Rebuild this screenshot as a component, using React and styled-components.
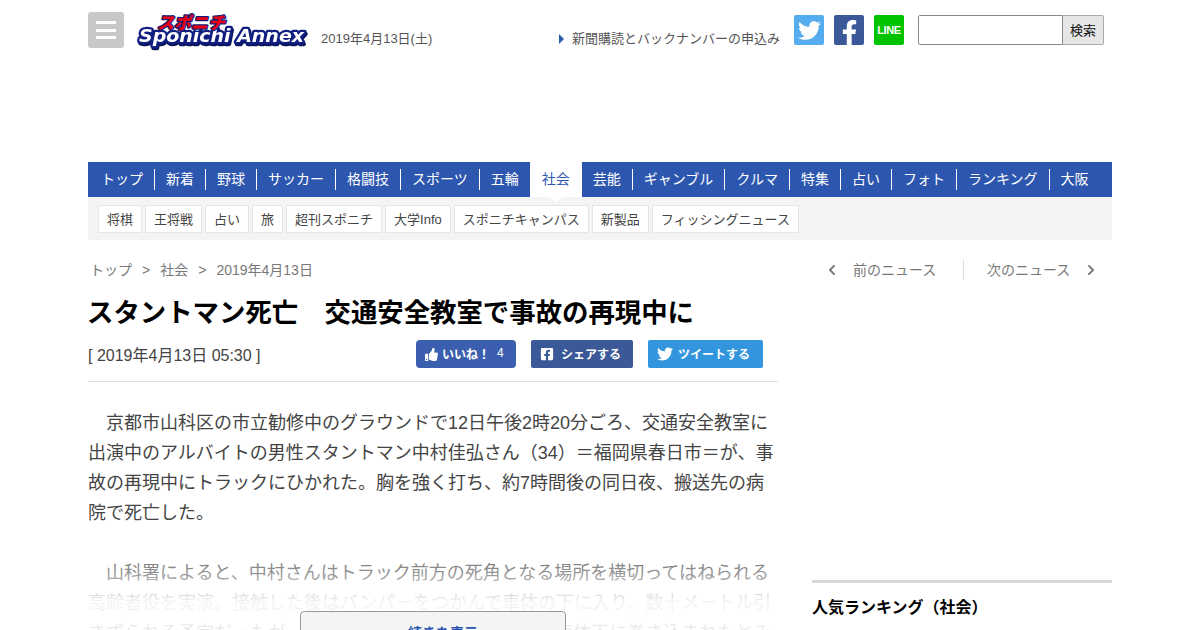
import React from "react";
import styled, { createGlobalStyle } from "styled-components";
import { FaTwitter, FaFacebookF, FaThumbsUp, FaFacebookSquare, FaChevronLeft, FaChevronRight } from "react-icons/fa";

const Global = createGlobalStyle`
  html, body { margin: 0; padding: 0; background: #fff; overflow: hidden; }
  body { font-family: "Liberation Sans", "Noto Sans CJK JP", sans-serif; color: #444; }
  a { color: inherit; text-decoration: none; }
`;

const Viewport = styled.div`height: 630px; overflow: hidden;`;
const Page = styled.div`width: 1024px; margin: 0 auto;`;

const Header = styled.header`
  height: 162px;
  box-sizing: border-box;
  padding: 12px 8px 0 0;
  display: flex;
  align-items: flex-start;
`;
const Menu = styled.button`
  width: 36px; height: 36px; padding: 9px 8px; border: 0; border-radius: 3px;
  background: #c8c8c8; display: flex; flex-direction: column; justify-content: space-between;
  box-sizing: border-box;
  span { display: block; height: 3px; background: #fff; }
`;
const Logo = styled.svg`width: 172px; height: 38px; margin-left: 13px; display: block; overflow: visible;`;
const LogoMain = styled.text`
  font-family: "DejaVu Sans", sans-serif; font-weight: 700; font-style: italic; font-size: 18.5px;
  fill: #fff; stroke: #101f80; stroke-width: 4.5px; paint-order: stroke; stroke-linejoin: round;
  filter: drop-shadow(1px 2px 0 #0a1560);
`;
const LogoKana = styled.text`
  font-family: "Noto Sans CJK JP", sans-serif; font-weight: 900; font-style: italic; font-size: 17px;
  fill: #e60012; stroke: #101f80; stroke-width: 2.4px; paint-order: stroke; stroke-linejoin: round;
`;
const DateText = styled.div`
  font-size: 13px; line-height: 16px; color: #555; margin: 19px 0 0 12px;
`;
const Right = styled.div`margin-left: auto; display: flex; align-items: flex-start;`;
const Subscribe = styled.a`
  font-size: 13px; line-height: 16px; color: #555; margin: 19px 4px 0 0; display: flex; align-items: center;
  &::before {
    content: ""; width: 0; height: 0; margin-right: 8px;
    border-left: 5px solid #2d5cab; border-top: 5px solid transparent; border-bottom: 5px solid transparent;
  }
`;
const Social = styled.a`
  width: 30px; height: 30px; margin: 3px 0 0 10px; border-radius: 2px;
  background: ${p => p.$bg}; color: #fff; overflow: hidden;
  display: flex; align-items: center; justify-content: center;
`;
const LineLabel = styled.span`font-size: 11px; font-weight: 700; letter-spacing: -0.4px;`;
const Search = styled.form`display: flex; margin: 3px 0 0 14px;`;
const SearchInput = styled.input`
  width: 145px; height: 30px; box-sizing: border-box; border: 1px solid #8a8a8a; border-radius: 2px 0 0 2px;
  background: #fff; padding: 0;
`;
const SearchButton = styled.button`
  width: 41px; height: 30px; box-sizing: border-box; border: 1px solid #aaa; border-left: 0; border-radius: 0 2px 2px 0;
  background: #e6e6e6; font: 13px "Liberation Sans", "Noto Sans CJK JP", sans-serif; color: #111; padding: 0 0 2px;
`;

const Nav = styled.nav`
  height: 35px; background: #2d57ae; display: flex; align-items: center; padding-left: 2px;
`;
const NavItem = styled.a`
  position: relative;
  font-size: 14px; color: ${p => p.$active ? "#2d57ae" : "#fff"};
  padding: 0 ${p => p.$active ? 12 : 11}px 4px;
  box-sizing: border-box;
  display: flex; align-items: center;
  height: ${p => p.$active ? 35 : 21}px;
  background: ${p => p.$active ? "#fff" : "transparent"};
  border-right: ${p => p.$sep ? "1px solid #fff" : "0"};
  ${p => p.$active && `
    &::after {
      content: ""; position: absolute; left: 50%; margin-left: -7px; top: 35px;
      border-left: 7px solid transparent; border-right: 7px solid transparent; border-top: 5px solid #fff;
    }
  `}
`;
const SubNav = styled.div`
  height: 43px; box-sizing: border-box; background: #f4f4f5; padding: 8px 10px; display: flex; gap: 3px;
`;
const Chip = styled.a`
  height: 28px; box-sizing: border-box; padding: 0 8px 2px; border: 1px solid #e6e6e6; background: #fff;
  font-size: 13px; color: #444; display: flex; align-items: center;
`;

const Content = styled.div`display: flex; justify-content: space-between; align-items: flex-start;`;
const Main = styled.main`width: 690px; position: relative; height: 390px; overflow: hidden;`;
const Crumbs = styled.div`
  font-size: 14px; line-height: 20px; color: #777; margin: 20px 0 0 2px; display: flex; gap: 10px;
`;
const Title = styled.h1`
  font-size: 26.4px; line-height: 36px; font-weight: 700; color: #000; margin: 15px 0 0 -1px;
  white-space: nowrap;
`;
const Meta = styled.div`
  display: flex; align-items: flex-start; margin-top: 9px; padding-bottom: 13px; border-bottom: 1px solid #ddd;
  padding-right: 15px;
`;
const Stamp = styled.div`font-size: 16px; line-height: 24px; color: #444; margin-right: auto; margin-top: 4px;`;
const Share = styled.a`
  height: 28px; box-sizing: border-box; width: ${p => p.$w}px; margin-left: ${p => p.$ml}px;
  background: ${p => p.$bg}; border-radius: ${p => p.$r}px; color: #fff;
  font-size: 12px; font-weight: 700; display: flex; align-items: center;
  padding: 0 0 2px ${p => p.$pl}px; gap: ${p => p.$gap}px;
  svg { margin-top: 2px; }
`;
const Count = styled.span`font-weight: 400; margin-left: 3px;`;
const Body = styled.div`
  margin-top: 26px; font-size: 18px; line-height: 30px; color: #444;
  p { margin: 0 0 30px; }
`;
const Fade = styled.div`
  position: absolute; left: 0; right: 0; top: 290px; bottom: 0;
  background: linear-gradient(to bottom, rgba(255,255,255,0) 0, rgba(255,255,255,.42) 42px, rgba(255,255,255,.95) 72px, rgba(255,255,255,.88) 100%);
`;
const More = styled.button`
  position: absolute; left: 212px; top: 371px; width: 266px; height: 40px; box-sizing: border-box;
  border: 1px solid #999; border-radius: 4px; background: #f4f4f4; padding: 3px 0 0 20px; display: block; text-align: center;
  font: 700 14px/20px "Liberation Sans", "Noto Sans CJK JP", sans-serif; color: #2d57ae;
`;

const Side = styled.aside`width: 300px;`;
const Pager = styled.div`
  display: flex; align-items: center; height: 20px; margin-top: 20px; font-size: 14px; color: #777;
`;
const PagerLink = styled.a`
  box-sizing: border-box; display: flex; align-items: center; gap: 15px; padding: ${p => p.$pad};
  width: ${p => p.$w}px; line-height: 20px;
`;
const PagerSep = styled.div`width: 1px; height: 20px; background: #ddd;`;
const Ranking = styled.h2`
  margin: 300px 0 0; border-top: 3px solid #d8d8d8; padding-top: 14px;
  font-size: 16px; line-height: 22px; font-weight: 700; color: #000;
`;

const nav = ["トップ","新着","野球","サッカー","格闘技","スポーツ","五輪","社会","芸能","ギャンブル","クルマ","特集","占い","フォト","ランキング","大阪"];
const chips = ["将棋","王将戦","占い","旅","超刊スポニチ","大学Info","スポニチキャンパス","新製品","フィッシングニュース"];

export default function App() {
  return (
    <Viewport>
      <Global />
      <Page>
        <Header>
          <Menu aria-label="メニュー"><span /><span /><span /></Menu>
          <Logo viewBox="0 0 172 38">
            <LogoMain x="2" y="30" textLength="165" lengthAdjust="spacingAndGlyphs">Sponichi Annex</LogoMain>
            <LogoKana x="20" y="17" textLength="68" lengthAdjust="spacingAndGlyphs">スポニチ</LogoKana>
          </Logo>
          <DateText>2019年4月13日(土)</DateText>
          <Right>
            <Subscribe href="#">新聞購読とバックナンバーの申込み</Subscribe>
            <Social href="#" $bg="#55acee"><FaTwitter size={23} /></Social>
            <Social href="#" $bg="#3b5998"><FaFacebookF size={25} style={{ marginTop: 5 }} /></Social>
            <Social href="#" $bg="#00c300"><LineLabel>LINE</LineLabel></Social>
            <Search onSubmit={e => e.preventDefault()}>
              <SearchInput />
              <SearchButton>検索</SearchButton>
            </Search>
          </Right>
        </Header>

        <Nav>
          {nav.map((n, i) => (
            <NavItem href="#" key={n} $active={n === "社会"} $sep={i < nav.length - 1 && n !== "社会" && n !== "五輪"}>{n}</NavItem>
          ))}
        </Nav>
        <SubNav>
          {chips.map(c => <Chip href="#" key={c}>{c}</Chip>)}
        </SubNav>

        <Content>
          <Main>
            <Crumbs>
              <span>トップ</span><span>&gt;</span><span>社会</span><span>&gt;</span><span>2019年4月13日</span>
            </Crumbs>
            <Title>スタントマン死亡　交通安全教室で事故の再現中に</Title>
            <Meta>
              <Stamp>[ 2019年4月13日 05:30 ]</Stamp>
              <Share href="#" $w={100} $bg="#3b5fae" $r={4} $pl={9} $gap={4} $ml={0}><FaThumbsUp size={13} />いいね！<Count>4</Count></Share>
              <Share href="#" $w={102} $bg="#3b5998" $r={2} $pl={9} $gap={7} $ml={15}><FaFacebookSquare size={14} />シェアする</Share>
              <Share href="#" $w={115} $bg="#3295dd" $r={2} $pl={9} $gap={5} $ml={15}><FaTwitter size={16} />ツイートする</Share>
            </Meta>
            <Body>
              <p>　京都市山科区の市立勧修中のグラウンドで12日午後2時20分ごろ、交通安全教室に出演中のアルバイトの男性スタントマン中村佳弘さん（34）＝福岡県春日市＝が、事故の再現中にトラックにひかれた。胸を強く打ち、約7時間後の同日夜、搬送先の病院で死亡した。</p>
              <p>　山科署によると、中村さんはトラック前方の死角となる場所を横切ってはねられる高齢者役を実演。接触した後はバンパーをつかんで車体の下に入り、数十メートル引きずられる予定だったが、何らかの原因で予定より早く、車体下に巻き込まれたとみられる。</p>
            </Body>
            <Fade />
            <More>続きを表示</More>
          </Main>
          <Side>
            <Pager>
              <PagerLink href="#" $w={151} $pad="0 0 0 14px"><FaChevronLeft size={12} />前のニュース</PagerLink>
              <PagerSep />
              <PagerLink href="#" $w={148} $pad="0 0 0 23px">次のニュース<FaChevronRight size={12} /></PagerLink>
            </Pager>
            <Ranking>人気ランキング（社会）</Ranking>
          </Side>
        </Content>
      </Page>
    </Viewport>
  );
}
